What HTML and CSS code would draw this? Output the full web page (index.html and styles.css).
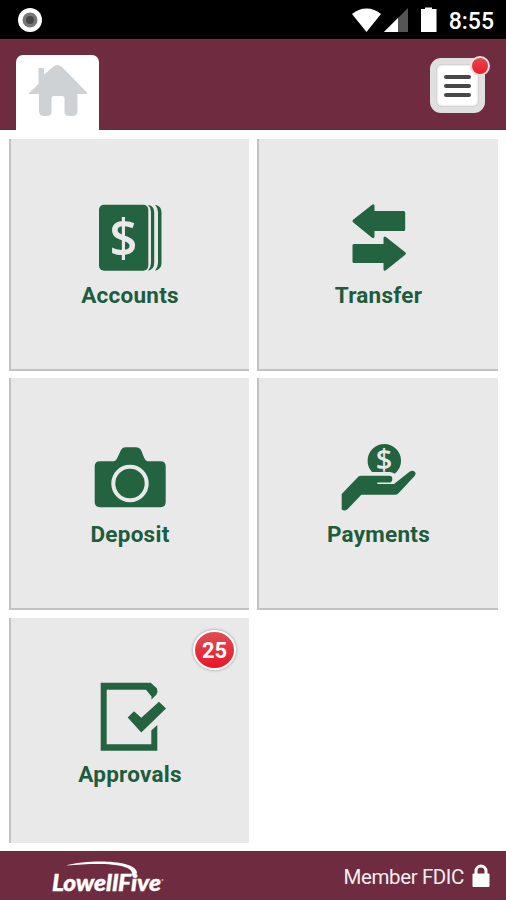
FILE: index.html
```html
<!DOCTYPE html>
<html lang="en">
    <head>
        <meta charset="UTF-8">
        <title>LowellFive</title>
        <link rel="stylesheet" href="styles.css">
    </head>
    <body>
        <div class="status-bar">
            <svg class="record" width="26" height="26" viewBox="0 0 26 26">
                <circle cx="13" cy="13" r="12" fill="#fff"/>
                <circle cx="13" cy="13" r="7.5" fill="#777"/>
                <circle cx="13" cy="13" r="4" fill="#484848"/>
            </svg>
            <svg class="signals" width="86" height="26" viewBox="0 0 86 26">
                <path d="M0 7C8 -0.500 21 -0.500 29 7L14.500 25Z" fill="#fff"/>
                <path d="M32 25L56 1V25Z" fill="#555"/>
                <path d="M32 25L46 11V25Z" fill="#fff"/>
                <path d="M69 2H73V0.500H80V2H84.500V25H69Z" fill="#fff"/>
            </svg>
            <span class="time">8:55</span>
        </div>

        <div class="header">
            <a class="home-tab" href="#">
                <svg width="60" height="53" viewBox="0 0 60 53">
                    <path d="M1 28L10.500 19V4Q10.500 3 11.500 3H15Q16 3 16 4V9.500L25.500 1.500Q29.500 -1.500 33.500 1.500L58.500 27Q60 29 58 29H49.500V46Q49.500 51 44.500 51H41Q36.500 51 36.500 47V34Q36.500 31 33.500 31H26.500Q23.500 31 23.500 34V47Q23.500 51 19 51H16Q11 51 11 46V29H2Q0 29 1 28Z" fill="#cfd2d4"/>
                </svg>
            </a>
            <a class="menu-button" href="#">
                <span class="bar"></span>
                <span class="bar"></span>
                <span class="bar"></span>
                <span class="dot"></span>
            </a>
        </div>

        <div class="tiles">
            <a class="tile" href="#">
                <svg class="icon" viewBox="0 0 80 80">
                    <rect x="9" y="4.700" width="49.300" height="66" rx="5"/>
                    <path d="M58 4.700Q64.200 6 64.200 12V63Q64.200 69.500 58 70.700Q61 67 61 63V12Q61 8 58 4.700Z"/>
                    <path d="M65 4.700Q71.500 6 71.500 12V63Q71.500 69.500 65 70.700Q68 67 68 63V12Q68 8 65 4.700Z"/>
                    <text class="dollar" x="33.500" y="56.500" font-size="53" textLength="28" lengthAdjust="spacingAndGlyphs">$</text>
                </svg>
                <span class="label">Accounts</span>
            </a>
            <a class="tile" href="#">
                <svg class="icon" viewBox="0 0 80 80">
                    <g class="soft">
                        <path d="M15 21L34 5.800V12.500H64.700V29.500H34V36.500Z"/>
                        <path d="M65.300 53.500L46 38.200V45.500H15V61.500H46V69.200Z"/>
                    </g>
                </svg>
                <span class="label">Transfer</span>
            </a>
            <a class="tile" href="#">
                <svg class="icon" viewBox="0 0 80 80">
                    <path d="M10 22.200H24Q26.500 21.500 27.500 18.500L31 11Q32.500 8.200 35 8.200H46.500Q49.500 8.200 51 11L54 18.500Q55 21.500 57.500 22.200H70.500Q75.700 22.200 75.700 27.500V63Q75.700 68.200 70.500 68.200H10Q4.700 68.200 4.700 63V27.500Q4.700 22.200 10 22.200Z"/>
                    <circle class="lens" cx="40" cy="44.500" r="16.700"/>
                </svg>
                <span class="label">Deposit</span>
            </a>
            <a class="tile" href="#">
                <svg class="icon" viewBox="0 0 80 80">
                    <g transform="translate(-0.500 0.700)">
                        <path d="M33.500 32.300A16.700 16.700 0 1 1 58.100 32.300L56 34Q54 32.300 51 32.300Z"/>
                        <text class="dollar" x="45.500" y="30.500" font-size="29">$</text>
                        <path d="M3.200 54.300L20 36.800Q21 36 22.500 36H51Q53.800 36 53.800 39.300T51 42.700H38.800V44.300H55.500L71 32Q74 30 76 31.800T76.300 36L60 53.500Q58.500 55 56.500 55H22.800L9 69.500Q6 72 3.200 69.700Z"/>
                    </g>
                </svg>
                <span class="label">Payments</span>
            </a>
            <a class="tile last" href="#">
                <svg class="icon" viewBox="0 0 80 80">
                    <path d="M10.700 3.800H60.700L67 9.500Q68 12.500 66.500 15.500L61.500 20.500V17.500L56 10.800H16.700V65.200H61.300V51.500L67.300 46V71.800H10.700Z"/>
                    <path d="M37.700 38.500L44 32.200L51.300 38.800L69 22.800L76 29.500L51.300 53.500Z"/>
                </svg>
                <span class="label">Approvals</span>
                <span class="badge">25</span>
            </a>
        </div>

        <div class="footer">
            <svg class="logo" width="125" height="46" viewBox="0 -3 125 46">
                <path d="M21 9.500C45 3 92 4 92 17L90.500 19.500H87C90 8 60 6 21 9.500Z" fill="#fff"/>
                <text class="logo-text" x="7" y="34.500" textLength="109" lengthAdjust="spacingAndGlyphs">LowellFive</text>
                <circle cx="117.500" cy="24" r="1" fill="#c9a9b3"/>
            </svg>
            <span class="fdic">Member FDIC</span>
            <svg width="18" height="24" viewBox="0 0 18 24">
                <path d="M4 11V7a5 5 0 0 1 10 0V11" fill="none" stroke="#fff" stroke-width="3"/>
                <rect x="0.500" y="9.500" width="17" height="13.500" rx="1" fill="#fff"/>
            </svg>
        </div>
    </body>
</html>
```
FILE: styles.css
```css
* {
    box-sizing: border-box;
}
body {
    font-family: Roboto, "Liberation Sans", sans-serif;
    margin: 0;
    height: 900px;
    display: flex;
    flex-direction: column;
    background: #fff;
    overflow: hidden;
}
a {
    text-decoration: none;
}
svg {
    display: block;
    flex: none;
}
.status-bar {
    height: 39px;
    display: flex;
    align-items: center;
    padding: 1px 12px 0 17px;
    background: #000;
    color: #fff;
}
.signals {
    margin-left: auto;
    margin-right: 11px;
}
.time {
    padding-top: 3px;
    font-size: 23px;
    font-weight: 500;
    line-height: 26px;
}
.header {
    height: 91px;
    display: flex;
    justify-content: space-between;
    align-items: flex-start;
    padding: 15px 21px 0 16px;
    background: #6f2b40;
    border-top: 1px solid #7d2a40;
}
.home-tab {
    width: 83px;
    height: 75px;
    padding: 10px 0 0 12px;
    background: #fff;
    border-radius: 7px 7px 0 0;
}
.menu-button {
    position: relative;
    width: 55px;
    height: 55px;
    margin-top: 3px;
    display: flex;
    flex-direction: column;
    align-items: center;
    justify-content: center;
    gap: 5px;
    background: #fff;
    border: 6px solid #e0e0e0;
    border-radius: 11px;
    box-shadow: inset 0 0 3px #888;
}
.bar {
    width: 27px;
    height: 4px;
    border-radius: 2px;
    background: #484848;
}
.dot {
    position: absolute;
    top: -8px;
    right: -11px;
    width: 20px;
    height: 20px;
    border: 2px solid #f5dfe0;
    border-radius: 50%;
    background: linear-gradient(#e2484e, #ed1c2b);
}
/* 功能入口 */
.tiles {
    height: 712px;
    flex: none;
    display: grid;
    grid-template-columns: 240px 241px;
    grid-template-rows: 231.5px 231.5px 225px;
    gap: 7.75px 8px;
    margin: 9px 0 0 9px;
}
.tile {
    position: relative;
    display: flex;
    flex-direction: column;
    align-items: center;
    padding-top: 61px;
    background: #e9e9e9;
    border-left: 2px solid #c2c2c2;
    border-bottom: 2px solid #c2c2c2;
}
.tile.last {
    border-bottom: none;
}
.icon {
    width: 80px;
    height: 80px;
    fill: #23633f;
}
.soft {
    stroke: #23633f;
    stroke-width: 3;
    stroke-linejoin: round;
}
.lens {
    fill: none;
    stroke: #e9e9e9;
    stroke-width: 4;
}
.dollar {
    font-family: "Open Sans", sans-serif;
    font-weight: 600;
    text-anchor: middle;
    fill: #e9e9e9;
}
.label {
    margin-top: 2px;
    font-size: 22.5px;
    font-weight: 700;
    line-height: 26px;
    letter-spacing: 0.25px;
    color: #1d5c3c;
}
.badge {
    position: absolute;
    top: 12px;
    right: 13px;
    width: 43px;
    height: 40px;
    border: 2px solid #fff;
    border-radius: 50%;
    background: linear-gradient(#dd5056, #ec1424);
    box-shadow: 0 0 3px #888;
    color: #fff;
    font-size: 22px;
    font-weight: 700;
    line-height: 37px;
    text-align: center;
}
.footer {
    height: 49px;
    margin-top: auto;
    display: flex;
    flex: none;
    align-items: center;
    padding: 1px 16px 0 45px;
    background: #6f2b40;
}
.logo-text {
    font-family: Lato, sans-serif;
    font-size: 23px;
    font-weight: 900;
    font-style: italic;
    fill: #fff;
    stroke: #fff;
    stroke-width: 0.4;
}
.fdic {
    margin-left: auto;
    margin-right: 8px;
    padding-top: 2px;
    font-size: 20.5px;
    letter-spacing: -0.4px;
    color: #f5eef0;
}
```
